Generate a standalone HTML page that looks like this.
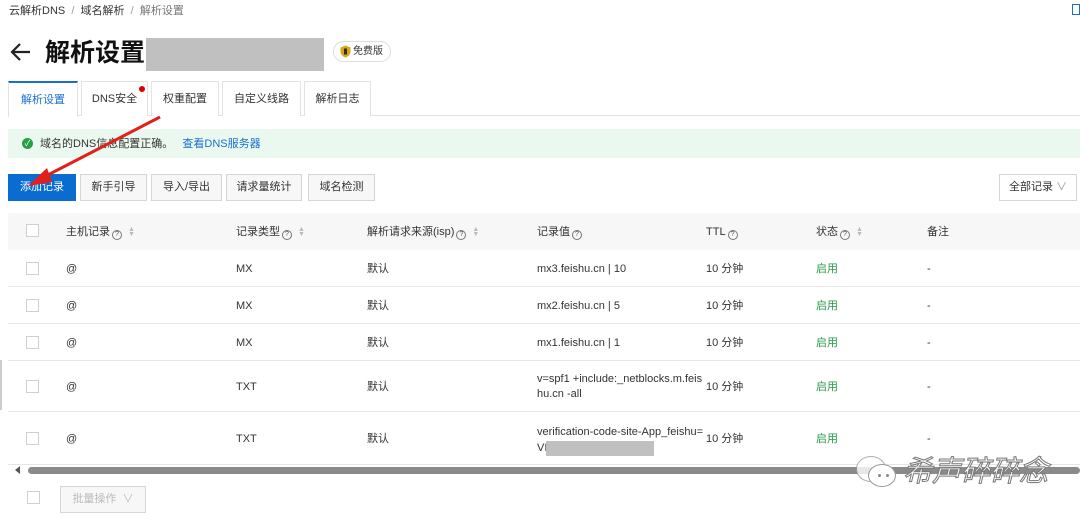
<!DOCTYPE html>
<html><head><meta charset="utf-8"><style>
*{margin:0;padding:0;box-sizing:border-box}
body{width:1080px;height:521px;overflow:hidden;background:#fff;font-family:"Liberation Sans","Noto Sans CJK SC",sans-serif;color:#333;font-size:11px;line-height:14px;position:relative}
.a{position:absolute;white-space:nowrap;line-height:14px}
.tab{position:absolute;top:81px;height:35px;border:1px solid #e3e3e3;border-bottom:none;background:#fff;font-size:11px;color:#333;text-align:center;line-height:34px}
.btn{position:absolute;top:174px;height:27px;border:1px solid #d6d6d6;background:#f7f7f7;font-size:11px;color:#333;text-align:center;line-height:25px}
.cb{position:absolute;width:13px;height:13px;border:1px solid #d0d0d0;background:#fff}
.row{position:absolute;left:8px;right:0;border-bottom:1px solid #e6e6e6}
.q{display:inline-block;width:10px;height:10px;border:1px solid #777;border-radius:50%;font-size:7px;line-height:8px;text-align:center;vertical-align:-1px;margin-left:2px;color:#555}
.s{display:inline-block;font-size:7px;color:#bbb;line-height:5px;vertical-align:middle;margin-left:6px;width:6px}
.g{color:#2a9a48}
</style></head><body>
<div class="a" style="left:9px;top:4px;color:#333">云解析DNS &nbsp;<span style="color:#999">/</span>&nbsp; 域名解析 &nbsp;<span style="color:#999">/</span>&nbsp; <span style="color:#777">解析设置</span></div>
<div class="a" style="left:1072px;top:4px;width:8px;height:11px;border:1px solid #1a6fd0"></div>
<svg class="a" style="left:9px;top:41px" width="24" height="22" viewBox="0 0 24 22"><path d="M21 11H3M11 3L3 11l8 8" stroke="#222" stroke-width="2.2" fill="none"/></svg>
<div class="a" style="left:45px;top:38px;font-size:25px;line-height:30px;font-weight:bold;color:#111">解析设置</div>
<div class="a" style="left:146px;top:38px;width:178px;height:33px;background:#c0c0c0"></div>
<div class="a" style="left:333px;top:41px;width:58px;height:21px;border:1px solid #ddd;border-radius:11px;font-size:10px;line-height:19px;padding-left:19px;color:#333">免费版</div>
<svg class="a" style="left:340px;top:45px" width="11" height="13" viewBox="0 0 11 13"><path d="M5.5 0.5L10.5 2.5V6.5C10.5 9.5 8 11.5 5.5 12.5C3 11.5 .5 9.5 .5 6.5V2.5Z" fill="#d8a619"/><rect x="4" y="3.5" width="3" height="6" fill="#2e2e2e"/></svg>
<div class="a" style="left:8px;top:115px;width:1072px;height:1px;background:#e3e3e3"></div>
<div class="tab" style="left:8px;width:70px;border-top:2px solid #1a6fd0;color:#1a6fd0;height:36px">解析设置</div>
<div class="tab" style="left:81px;width:67px">DNS安全</div>
<div class="a" style="left:139px;top:86px;width:6px;height:6px;border-radius:50%;background:#d00"></div>
<div class="tab" style="left:151px;width:68px">权重配置</div>
<div class="tab" style="left:222px;width:79px">自定义线路</div>
<div class="tab" style="left:304px;width:67px">解析日志</div>
<div class="a" style="left:8px;top:129px;width:1072px;height:29px;background:#ebf8ef"></div>
<div class="a" style="left:22px;top:138px;width:11px;height:11px;border-radius:50%;background:#27a047;color:#fff;font-size:8px;line-height:11px;text-align:center">✓</div>
<div class="a" style="left:40px;top:137px;font-size:11px;color:#333">域名的DNS信息配置正确。 &nbsp;&nbsp;<span style="color:#1a6fd0">查看DNS服务器</span></div>
<div class="btn" style="left:8px;width:68px;background:#0a6bd1;border-color:#0a6bd1;color:#fff">添加记录</div>
<div class="btn" style="left:80px;width:67px">新手引导</div>
<div class="btn" style="left:151px;width:71px">导入/导出</div>
<div class="btn" style="left:226px;width:76px">请求量统计</div>
<div class="btn" style="left:308px;width:67px">域名检测</div>
<div class="btn" style="left:999px;width:78px;background:#fff">全部记录 <span style="color:#999">∨</span></div>
<div class="a" style="left:8px;top:213px;width:1072px;height:37px;background:#f7f7f7"></div>
<div class="cb" style="left:26px;top:224px"></div>
<div class="a" style="left:66px;top:225px;color:#333">主机记录<span class="q">?</span><span class="s">▲<br>▼</span></div>
<div class="a" style="left:236px;top:225px">记录类型<span class="q">?</span><span class="s">▲<br>▼</span></div>
<div class="a" style="left:367px;top:225px">解析请求来源(isp)<span class="q">?</span><span class="s">▲<br>▼</span></div>
<div class="a" style="left:537px;top:225px">记录值<span class="q">?</span></div>
<div class="a" style="left:706px;top:225px">TTL<span class="q">?</span></div>
<div class="a" style="left:816px;top:225px">状态<span class="q">?</span><span class="s">▲<br>▼</span></div>
<div class="a" style="left:927px;top:225px">备注</div>
<div class="row" style="top:249px;height:38px"></div>
<div class="row" style="top:287px;height:37px"></div>
<div class="row" style="top:324px;height:37px"></div>
<div class="row" style="top:361px;height:51px"></div>
<div class="row" style="top:412px;height:53px"></div>
<div class="a" style="left:0;top:360px;width:2px;height:50px;background:#ccc"></div>

<div class="cb" style="left:26px;top:262px"></div><div class="a" style="left:66px;top:262px">@</div><div class="a" style="left:236px;top:262px">MX</div><div class="a" style="left:367px;top:262px">默认</div><div class="a" style="left:537px;top:262px">mx3.feishu.cn | 10</div><div class="a" style="left:706px;top:262px">10 分钟</div><div class="a g" style="left:816px;top:262px">启用</div><div class="a" style="left:927px;top:262px">-</div>
<div class="cb" style="left:26px;top:299px"></div><div class="a" style="left:66px;top:299px">@</div><div class="a" style="left:236px;top:299px">MX</div><div class="a" style="left:367px;top:299px">默认</div><div class="a" style="left:537px;top:299px">mx2.feishu.cn | 5</div><div class="a" style="left:706px;top:299px">10 分钟</div><div class="a g" style="left:816px;top:299px">启用</div><div class="a" style="left:927px;top:299px">-</div>
<div class="cb" style="left:26px;top:336px"></div><div class="a" style="left:66px;top:336px">@</div><div class="a" style="left:236px;top:336px">MX</div><div class="a" style="left:367px;top:336px">默认</div><div class="a" style="left:537px;top:336px">mx1.feishu.cn | 1</div><div class="a" style="left:706px;top:336px">10 分钟</div><div class="a g" style="left:816px;top:336px">启用</div><div class="a" style="left:927px;top:336px">-</div>
<div class="cb" style="left:26px;top:380px"></div><div class="a" style="left:66px;top:380px">@</div><div class="a" style="left:236px;top:380px">TXT</div><div class="a" style="left:367px;top:380px">默认</div><div class="a" style="left:537px;top:372px;line-height:15px">v=spf1 +include:_netblocks.m.feis<br>hu.cn -all</div><div class="a" style="left:706px;top:380px">10 分钟</div><div class="a g" style="left:816px;top:380px">启用</div><div class="a" style="left:927px;top:380px">-</div>
<div class="cb" style="left:26px;top:432px"></div><div class="a" style="left:66px;top:432px">@</div><div class="a" style="left:236px;top:432px">TXT</div><div class="a" style="left:367px;top:432px">默认</div><div class="a" style="left:537px;top:424px;line-height:16px">verification-code-site-App_feishu=<br>VI</div><div class="a" style="left:546px;top:441px;width:108px;height:15px;background:#c0c0c0"></div><div class="a" style="left:706px;top:432px">10 分钟</div><div class="a g" style="left:816px;top:432px">启用</div><div class="a" style="left:927px;top:432px">-</div>

<div class="a" style="left:15px;top:466px;width:0;height:0;border-top:4px solid transparent;border-bottom:4px solid transparent;border-right:5px solid #555"></div>
<div class="a" style="left:28px;top:467px;width:1052px;height:7px;border-radius:4px;background:#8a8a8a"></div>
<div class="cb" style="left:27px;top:491px"></div>
<div class="btn" style="left:60px;top:486px;width:86px;color:#bbb;height:27px">批量操作 &nbsp;∨</div>
<svg class="a" style="left:0;top:0" width="200" height="200"><line x1="160" y1="117" x2="42" y2="178" stroke="#e0201a" stroke-width="3"/><path d="M28 186L47 168L52 182Z" fill="#e0201a"/></svg>
<div class="a" style="left:856px;top:456px;width:30px;height:26px;border:1.5px solid #999;border-radius:50%;background:#fff;opacity:.8"></div>
<div class="a" style="left:868px;top:464px;width:28px;height:23px;border:1.5px solid #999;border-radius:50%;background:#fff"></div>
<div class="a" style="left:878px;top:474px;width:3px;height:3px;border-radius:50%;background:#888"></div>
<div class="a" style="left:886px;top:474px;width:3px;height:3px;border-radius:50%;background:#888"></div>
<div class="a" style="left:903px;top:455px;font-size:29px;line-height:34px;color:#fff;-webkit-text-stroke:1px #777;font-style:italic">希声碎碎念</div>
</body></html>
